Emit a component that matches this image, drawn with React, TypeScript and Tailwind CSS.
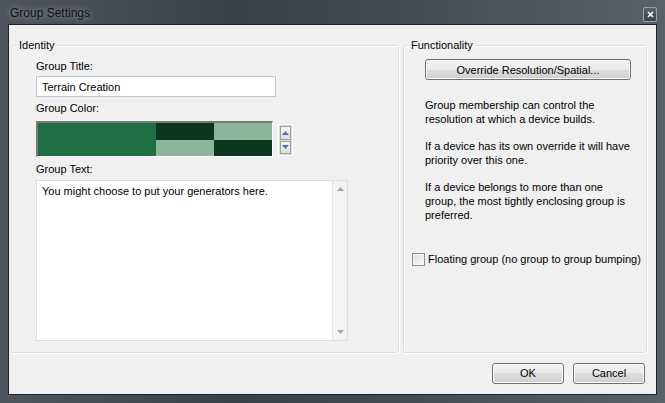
import React from "react";

const font = { fontFamily: '"Liberation Sans", Arial, sans-serif' };

function WinButton({ label, className = "" }: { label: string; className?: string }) {
  return (
    <div
      className={
        "flex h-[21px] items-center justify-center rounded-[3px] border border-[#707070] bg-[linear-gradient(#f2f2f2,#ebebeb_50%,#dddddd_50%,#cfcfcf)] text-[11px] text-black shadow-[inset_0_0_0_1px_#fcfcfc] " +
        className
      }
    >
      {label}
    </div>
  );
}

function Spinner() {
  return (
    <div className="ml-[5px] mt-[3px] flex h-[32px] w-[15px] flex-col gap-[1px] border border-white bg-[#d8d8d8] p-[1px]">
      {/* up */}
      <div className="flex flex-1 items-center justify-center border border-[#a0a0a0] bg-[linear-gradient(#f4f4f4,#dcdcdc)]">
        <svg width="7" height="4" viewBox="0 0 7 4">
          <path d="M3.5 0 L7 4 L0 4 Z" fill="#4d6fc6" />
        </svg>
      </div>
      {/* down */}
      <div className="flex flex-1 items-center justify-center border border-[#a0a0a0] bg-[linear-gradient(#f4f4f4,#dcdcdc)]">
        <svg width="7" height="4" viewBox="0 0 7 4">
          <path d="M0 0 L7 0 L3.5 4 Z" fill="#4d6fc6" />
        </svg>
      </div>
    </div>
  );
}

export default function App() {
  return (
    <div
      className="flex h-[403px] w-[665px] flex-col bg-[linear-gradient(90deg,#4f555c,#3b4149_35%,#434a52_60%,#5b6168)]"
      style={font}
    >
      {/* Title bar */}
      <div className="flex h-[24px] shrink-0 items-start justify-between pl-[10px] pr-[8px]">
        <span className="mt-[5px] text-[12px] leading-[16px] text-[#111] [text-shadow:0_0_6px_rgba(255,255,255,0.55)]">
          Group Settings
        </span>
        <div className="mt-[7px] flex h-[15px] w-[14px] items-center justify-center rounded-[2px] border border-[#9aa0a6] bg-[linear-gradient(#5d636a,#3c4249)]">
          <svg width="7" height="7" viewBox="0 0 7 7">
            <path d="M1 1 L6 6 M6 1 L1 6" stroke="#fff" strokeWidth="1.6" />
          </svg>
        </div>
      </div>

      {/* Client area */}
      <div className="mx-[8px] mb-[8px] flex flex-1 flex-col border border-[#1e2226] bg-[#f0f0f0] pl-[2px] pt-[13px]">
        <div className="flex gap-[4px]">
          {/* Identity */}
          <fieldset className="h-[315px] w-[388px] rounded-[3px] border border-[#d5dfe5] shadow-[inset_1px_1px_0_#fff,1px_1px_0_#fff]">
            <legend className="ml-[5px] px-[2px] text-[11px] leading-[14px] text-black">Identity</legend>
            <div className="flex flex-col pl-[24px] pt-[7px] text-[11px] leading-[14px] text-black">
              <span>Group Title:</span>
              <div className="mt-[3px] flex h-[21px] w-[240px] items-center border border-[#b6c7d6] bg-white pl-[5px]">
                Terrain Creation
              </div>
              <span className="mt-[4px]">Group Color:</span>
              <div className="mt-[6px] flex">
                <div className="flex h-[36px] w-[237px] border-l-2 border-t-2 border-l-[#7a7a7a] border-t-[#7a7a7a] border-b border-r border-b-white border-r-white">
                  <div className="w-[118px] bg-[#1e7044]" />
                  <div className="flex w-[59px] flex-col">
                    <div className="flex-1 bg-[#0d3620]" />
                    <div className="flex-1 bg-[#8db59c]" />
                  </div>
                  <div className="flex w-[58px] flex-col">
                    <div className="flex-1 bg-[#8db59c]" />
                    <div className="flex-1 bg-[#0d3620]" />
                  </div>
                </div>
                <Spinner />
              </div>
              <span className="mt-[5px]">Group Text:</span>
              <div className="mt-[4px] flex h-[161px] w-[312px] border border-[#d5dfe5] bg-white">
                <div className="flex-1 pl-[5px] pt-[3px]">You might choose to put your generators here.</div>
                <div className="flex w-[15px] flex-col items-center justify-between border-l border-[#e6e6e6] bg-[#f3f3f3] py-[6px]">
                  <svg width="7" height="4" viewBox="0 0 7 4">
                    <path d="M3.5 0 L7 4 L0 4 Z" fill="#a8a8a8" />
                  </svg>
                  <svg width="7" height="4" viewBox="0 0 7 4">
                    <path d="M0 0 L7 0 L3.5 4 Z" fill="#a8a8a8" />
                  </svg>
                </div>
              </div>
            </div>
          </fieldset>

          {/* Functionality */}
          <fieldset className="h-[315px] w-[244px] rounded-[3px] border border-[#d5dfe5] shadow-[inset_1px_1px_0_#fff,1px_1px_0_#fff]">
            <legend className="ml-[5px] px-[2px] text-[11px] leading-[14px] text-black">Functionality</legend>
            <div className="flex flex-col pt-[7px] text-[11px] leading-[14px] text-black">
              <WinButton label="Override Resolution/Spatial..." className="ml-[21px] w-[206px]" />
              <div className="ml-[21px] mt-[18px] flex flex-col gap-[13px] whitespace-nowrap">
                <p>
                  Group membership can control the
                  <br />
                  resolution at which a device builds.
                </p>
                <p>
                  If a device has its own override it will have
                  <br />
                  priority over this one.
                </p>
                <p>
                  If a device belongs to more than one
                  <br />
                  group, the most tightly enclosing group is
                  <br />
                  preferred.
                </p>
              </div>
              <label className="ml-[8px] mt-[30px] flex items-center gap-[3px] whitespace-nowrap">
                <span className="h-[13px] w-[13px] border border-[#8f8f8f] bg-[linear-gradient(135deg,#dcdcdc,#fbfbfb)] shadow-[inset_0_0_0_1px_#f4f4f4]" />
                Floating group (no group to group bumping)
              </label>
            </div>
          </fieldset>
        </div>

        {/* Dialog buttons */}
        <div className="mt-[10px] flex justify-end gap-[9px] pr-[11px]">
          <WinButton label="OK" className="w-[72px]" />
          <WinButton label="Cancel" className="w-[72px]" />
        </div>
      </div>
    </div>
  );
}
